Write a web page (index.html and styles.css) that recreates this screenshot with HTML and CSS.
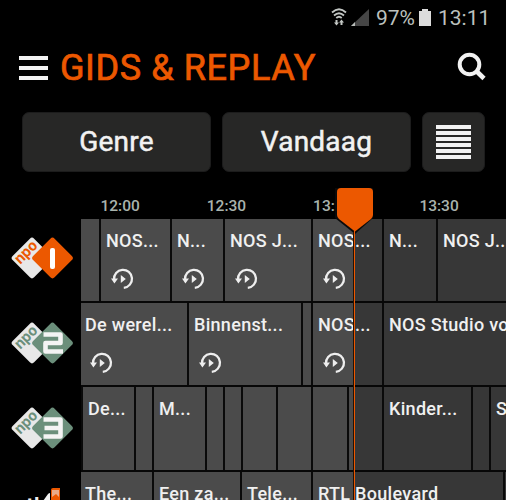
FILE: index.html
```html
<!DOCTYPE html>
<html lang="nl">
<head>
<meta charset="utf-8">
<title>Gids &amp; Replay</title>
<link rel="stylesheet" href="styles.css">
</head>
<body>
<svg class="defs" width="0" height="0">
  <symbol id="replay" viewBox="0 0 24 22">
    <path d="M3 11.500A9 9 0 1 1 12.800 19.800" fill="none" stroke="#eee" stroke-width="2.300"/>
    <path d="M0 10.500H7L3.400 15.500Z M9.800 7V15L14.800 11Z" fill="#eee"/>
  </symbol>
  <symbol id="npo" viewBox="0 0 64 44">
    <rect x="6.800" y="6.800" width="30.400" height="30.400" rx="3" transform="rotate(45 22 22)" fill="#e8e8e8"/>
    <rect x="27.300" y="6.800" width="30.400" height="30.400" rx="3" transform="rotate(45 42.500 22)" fill="currentColor"/>
  </symbol>
</svg>
<header class="status">
  <svg class="wifi" width="16" height="18" viewBox="0 0 16 18"><g fill="none" stroke="#c3c7c4" stroke-width="1.800"><path d="M1 4.500Q8-2 15 4.500M3 7.500Q8 3 13 7.500M5.300 10Q8 7.500 10.700 10"/></g><path d="M4.500 12v2.500H3L5.500 17.500 8 14.500H6.500V12ZM9.500 17V14.500H8L10.500 11.500 13 14.500H11.500V17Z" fill="#c3c7c4"/></svg>
  <svg class="signal" width="18" height="17" viewBox="0 0 18 17"><path d="M18 0V17H0Z" fill="#464646"/><path d="M4 13V17H0Z" fill="#b8bdba"/></svg>
  <span class="percent">97%</span>
  <svg class="battery" width="12" height="17" viewBox="0 0 12 17"><path d="M3 0H9V2H12V17H0V2H3Z" fill="#dcdcdc"/></svg>
  <span class="clock">13:11</span>
</header>
<div class="titlebar">
  <div class="menu"><i></i><i></i><i></i></div>
  <h1>GIDS &amp; REPLAY</h1>
  <svg class="search" width="30" height="30" viewBox="0 0 30 30" fill="none" stroke="#f2f2f2"><circle cx="12.500" cy="12.500" r="9.800" stroke-width="4"/><path d="M18.800 18.500L27 26.500" stroke-width="4.600"/></svg>
</div>
<div class="filters">
  <button class="genre">Genre</button>
  <button class="day">Vandaag</button>
  <button class="list"><i></i><i></i><i></i><i></i><i></i><i></i></button>
</div>
<div class="times"><span>12:00</span><span>12:30</span><span>13:00</span><span>13:30</span></div>
<main class="guide">
  <aside class="channels">
    <svg class="npo1" width="64" height="44"><use href="#npo"/><text class="npo" x="-13" y="4" transform="translate(16.500 16.800) rotate(-45)" textLength="26" lengthAdjust="spacingAndGlyphs">npo</text><rect x="40" y="12" width="5" height="21" rx="2" fill="#fff"/></svg>
    <svg class="npo2" width="64" height="44"><use href="#npo"/><text class="npo" x="-13" y="4" transform="translate(16.500 16.800) rotate(-45)" textLength="26" lengthAdjust="spacingAndGlyphs">npo</text><path d="M33.500 13.500H50.500V22H35.500V30.500H53" fill="none" stroke="#f4f4f4" stroke-width="4.600" stroke-linejoin="round"/></svg>
    <svg class="npo3" width="64" height="44"><use href="#npo"/><text class="npo" x="-13" y="4" transform="translate(16.500 16.800) rotate(-45)" textLength="26" lengthAdjust="spacingAndGlyphs">npo</text><path d="M33.500 13.500H50.500V30.500H33.500M34.500 22H50" fill="none" stroke="#f4f4f4" stroke-width="4.600" stroke-linejoin="round"/></svg>
    <div class="rtl"><span>rtl</span><svg width="18" height="20" viewBox="0 0 18 20"><path d="M0 13L5 6Q6 5 7 5V20H0Z" fill="#f2f2f2"/><path d="M8 2Q8 0 10 0H17V20H8Z" fill="#ec5800"/><path d="M9 2H16V9L13 6 9 9Z" fill="#e9ab88"/></svg></div>
  </aside>
  <section class="rows">
    <div class="row">
      <div class="cell" style="--w:20"></div>
      <div class="cell" style="--w:71">NOS...<svg class="rp"><use href="#replay"/></svg></div>
      <div class="cell" style="--w:53">N...<svg class="rp"><use href="#replay"/></svg></div>
      <div class="cell" style="--w:88">NOS J...<svg class="rp"><use href="#replay"/></svg></div>
      <div class="cell" style="--w:71">NOS...<svg class="rp"><use href="#replay"/></svg></div>
      <div class="cell" style="--w:54">N...</div>
      <div class="cell" style="--w:90">NOS J...</div>
    </div>
    <div class="row">
      <div class="cell first" style="--w:108">De werel...<svg class="rp"><use href="#replay"/></svg></div>
      <div class="cell" style="--w:114">Binnenst...<svg class="rp"><use href="#replay"/></svg></div>
      <div class="cell" style="--w:10"></div>
      <div class="cell" style="--w:71">NOS...<svg class="rp"><use href="#replay"/></svg></div>
      <div class="cell" style="--w:200">NOS Studio voetbal</div>
    </div>
    <div class="row">
      <div class="cell" style="--w:2"></div>
      <div class="cell" style="--w:53">De...</div>
      <div class="cell" style="--w:18"></div>
      <div class="cell" style="--w:53">M...</div>
      <div class="cell" style="--w:18"></div>
      <div class="cell" style="--w:18"></div>
      <div class="cell" style="--w:35"></div>
      <div class="cell" style="--w:35"></div>
      <div class="cell" style="--w:36"></div>
      <div class="cell" style="--w:35"></div>
      <div class="cell wide" style="--w:89">Kinder...</div>
      <div class="cell" style="--w:18"></div>
      <div class="cell" style="--w:70">S...</div>
    </div>
    <div class="row last">
      <div class="cell first" style="--w:73">The...</div>
      <div class="cell" style="--w:88">Een za...</div>
      <div class="cell" style="--w:71">Tele...</div>
      <div class="cell" style="--w:192">RTL Boulevard</div>
      <div class="cell" style="--w:50"></div>
    </div>
  </section>
</main>
<svg class="now" width="42" height="312" viewBox="0 0 42 312"><path d="M1 0H39V30L21 46 1 30Z" fill="#0a0a0a"/><path d="M20.500 42V312" stroke="#ec5800" stroke-width="1"/><path d="M19.500 44V312" stroke="#241205" stroke-width="1"/><path d="M7 0H35Q39 0 39 4V27Q39 29 37 31L21 43.500 5 31Q3 29 3 27V4Q3 0 7 0Z" fill="#ec5800"/></svg>
</body>
</html>
```
FILE: styles.css
```css
* { box-sizing: border-box; }
body {
  margin: 0;
  width: 506px;
  height: 500px;
  overflow: hidden;
  position: relative;
  background: #000;
  color: #f0f0f0;
  font-family: Roboto, "Liberation Sans", sans-serif;
}
svg { display: block; flex: none; }
.defs { position: absolute; }
.status {
  height: 36px;
  padding: 8px 16px 0 0;
  display: flex;
  justify-content: flex-end;
  font-size: 21px;
  line-height: 20px;
  color: #bcc1be;
}
.wifi { margin-right: 1px; }
.signal { margin: 1px 7px 0 3px; }
.percent { width: 40px; letter-spacing: -0.1px; }
.battery { margin: 1px 7px 0 3px; }
.clock { width: 52px; }
.titlebar {
  height: 76px;
  padding-left: 19px;
  display: flex;
}
.menu {
  width: 29px;
  padding-top: 20px;
  display: flex;
  flex-direction: column;
  gap: 6px;
}
.menu i { height: 4px; background: #f2f2f2; }
h1 {
  margin: 11px 0 0 12px;
  width: 397px;
  font-size: 36px;
  line-height: 42px;
  font-weight: 400;
  letter-spacing: 0.6px;
  color: #ec5800;
  -webkit-text-stroke: 0.7px #ec5800;
}
.search { margin-top: 16px; }
.filters {
  height: 60px;
  padding-left: 22px;
  display: flex;
  gap: 11px;
}
button {
  height: 60px;
  padding: 0;
  border: 1px solid #1c1c1c;
  border-radius: 7px;
  background: #272726;
  color: #f2f2f2;
  font: 400 28px/58px Roboto, sans-serif;
  letter-spacing: 0.2px;
  -webkit-text-stroke: 0.5px #f2f2f2;
}
.genre, .day { width: 189px; }
.list {
  width: 63px;
  display: flex;
  flex-direction: column;
  align-items: center;
  justify-content: center;
  gap: 2px;
}
.list i { width: 35px; height: 4px; background: #f2f2f2; }
.times {
  height: 47px;
  padding: 24px 0 0 67px;
  display: flex;
  font-size: 15.500px;
  line-height: 20px;
  font-weight: 500;
  color: #a9b3ad;
}
.times span { width: 106.300px; text-align: center; flex: none; }
.guide { display: flex; height: 281px; overflow: hidden; }
.channels { width: 81px; padding: 17px 0 0 10px; flex: none; }
.channels svg { margin-bottom: 41px; }
.npo1 { color: #ec5800; }
.npo2, .npo3 { color: #6b8f7b; }
.npo { font: 700 15px Inter, sans-serif; fill: currentColor; }
.channels .rtl { display: flex; padding-left: 8px; font: 700 20px/20px Inter, sans-serif; }
.rtl span { width: 25px; padding-top: 4px; }
.channels .rtl svg { margin: -3px 0 0; }
.rows { width: 425px; flex: none; }
.row {
  height: 84px;
  display: flex;
  overflow: hidden;
  border-bottom: 2px solid #070707;
  background: linear-gradient(90deg, #4b4b4b 273px, #373737 273px);
}
.row:nth-child(3) { height: 85px; }
.cell {
  width: calc(var(--w) * 1px);
  flex: none;
  height: 100%;
  padding: 11px 0 0 5px;
  border-right: 2px solid #0a0a0a;
  overflow: hidden;
  white-space: nowrap;
  font-size: 18px;
  line-height: 22px;
  font-weight: 500;
  letter-spacing: 0.3px;
}
.cell:empty { padding: 0; }
.cell.first { padding-left: 4px; }
.rp { width: 24px; height: 22px; margin: 16px 0 0 5px; }
.now { position: absolute; left: 334px; top: 188px; }
```
